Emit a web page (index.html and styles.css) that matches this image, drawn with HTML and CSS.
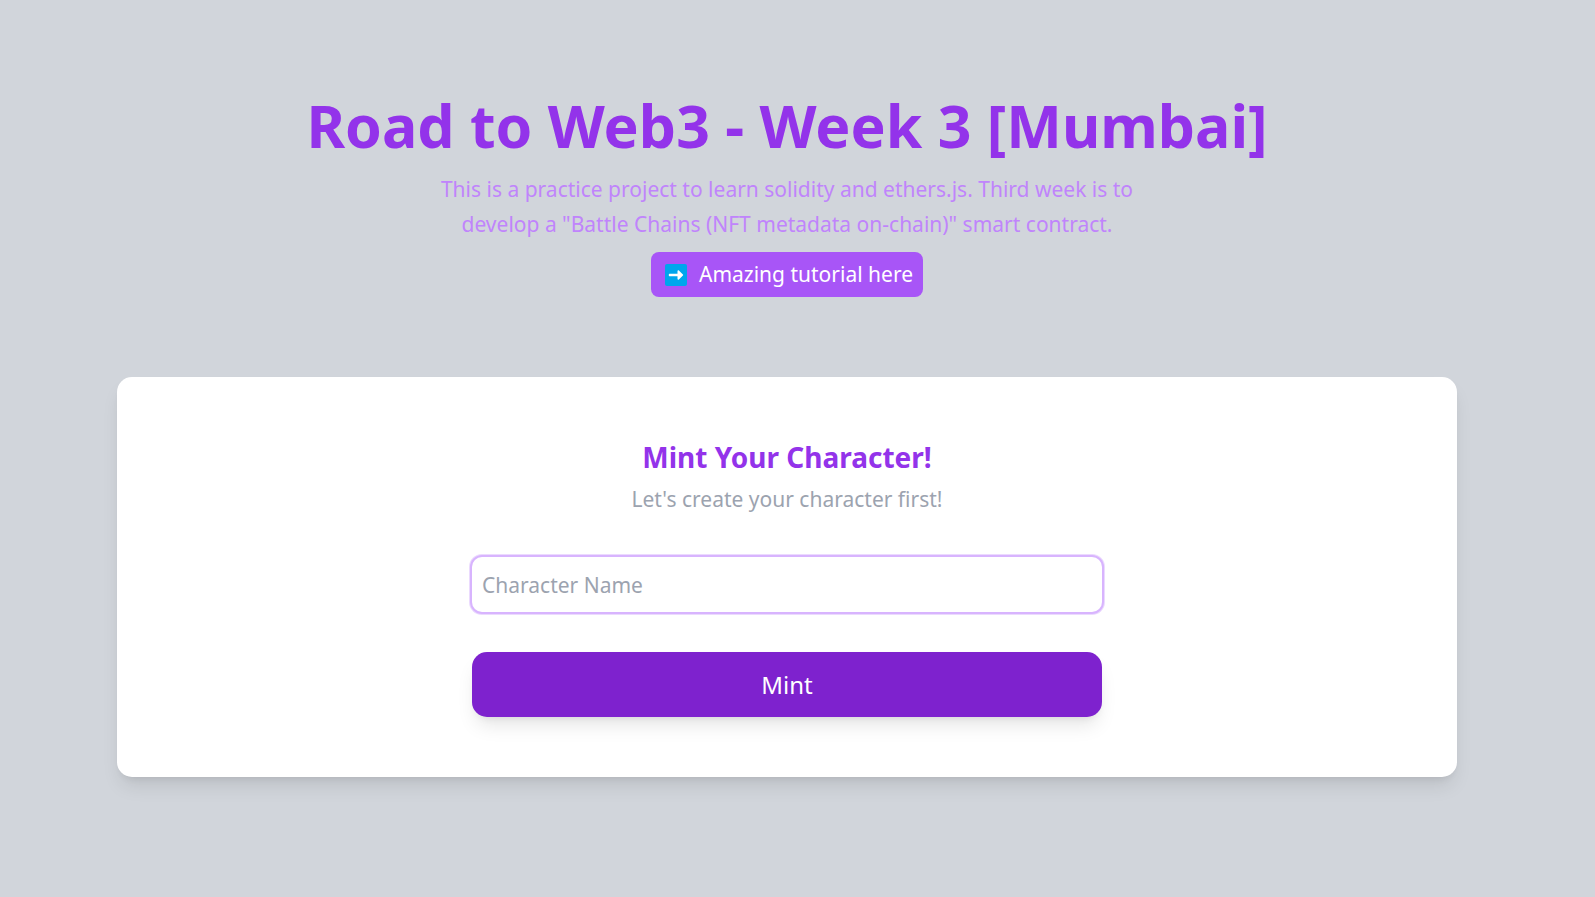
FILE: index.html
```
<!DOCTYPE html>
<html lang="en">
<head>
  <meta charset="utf-8">
  <meta name="viewport" content="width=device-width, initial-scale=1">
  <title>Road to Web3 - Week 3</title>
  <link rel="stylesheet" href="styles.css">
</head>
<body class="page">
  <header class="hero">
    <h1 class="hero-title">Road to Web3 - Week 3 [Mumbai]</h1>
    <p class="hero-text">This is a practice project to learn solidity and ethers.js. Third week is to<br>develop a "Battle Chains (NFT metadata on-chain)" smart contract.</p>
    <a class="tutorial-link" href="#">
      <svg class="tutorial-icon" viewBox="0 0 22 22" aria-hidden="true">
        <rect width="22" height="22" rx="2" fill="#00a6ed"/>
        <path d="M4.800 9.700h7.700V7.200c0-.8.8-1.200 1.400-.6l4 3.800c.4.4.4.8 0 1.200l-4 3.800c-.6.6-1.400.2-1.400-.6v-2.500H4.800c-.7 0-1-.4-1-1v-.6c0-.6.3-1 1-1z" fill="#fff"/>
      </svg>
      <span>Amazing tutorial here</span>
    </a>
  </header>
  <main class="card">
    <h2 class="card-title">Mint Your Character!</h2>
    <p class="card-text">Let's create your character first!</p>
    <form class="mint-form">
      <input class="name-input" type="text" placeholder="Character Name" aria-label="Character Name">
      <button class="mint-button" type="button">Mint</button>
    </form>
  </main>
</body>
</html>
```
FILE: styles.css
```
* {
  box-sizing: border-box;
}

.page {
  margin: 0;
  min-height: 100vh;
  padding: 90px 138px 120px 117px;
  background: #d1d5db;
  font-family: "Noto Sans", "Open Sans", sans-serif;
}

.hero {
  display: flex;
  flex-direction: column;
  align-items: center;
  text-align: center;
}

.hero-title {
  margin: 0;
  color: #9333ea;
  font-size: 59px;
  font-weight: 700;
  line-height: 70px;
}

.hero-text {
  margin: 12px 0 10px;
  color: #c084fc;
  font-size: 21px;
  line-height: 35px;
}

.tutorial-link {
  display: flex;
  align-items: center;
  gap: 12px;
  padding: 5px 10px 5px 14px;
  border-radius: 8px;
  background: #a855f7;
  color: #fff;
  font-size: 21px;
  line-height: 35px;
  text-decoration: none;
}

.tutorial-icon {
  width: 22px;
  height: 22px;
}

.card {
  display: flex;
  flex-direction: column;
  align-items: center;
  margin-top: 80px;
  padding: 60px;
  border-radius: 15px;
  background: #fff;
  box-shadow: 0 12px 19px -4px rgba(0, 0, 0, 0.1), 0 5px 8px -5px rgba(0, 0, 0, 0.1);
  text-align: center;
}

.card-title {
  margin: 0 0 4px;
  color: #9333ea;
  font-size: 28px;
  font-weight: 700;
  line-height: 41px;
}

.card-text {
  margin: 0;
  color: #9ca3af;
  font-size: 21px;
  line-height: 35px;
}

.mint-form {
  display: flex;
  flex-direction: column;
  gap: 40px;
  width: 100%;
  max-width: 630px;
  margin-top: 40px;
}

.name-input {
  width: 100%;
  height: 55px;
  padding: 0 10px;
  border: 0;
  border-radius: 10px;
  outline: 0;
  background: #fff;
  box-shadow: 0 0 0 2px #d8b4fe, 0 0 0 3px #ebdafe;
  color: #374151;
  font-family: inherit;
  font-size: 21px;
}

.name-input::placeholder {
  color: #9ca3af;
  opacity: 1;
}

.mint-button {
  height: 65px;
  border: 0;
  border-radius: 15px;
  background: #7e22ce;
  box-shadow: 0 12px 19px -4px rgba(0, 0, 0, 0.1), 0 5px 8px -5px rgba(0, 0, 0, 0.1);
  color: #fff;
  font-family: inherit;
  font-size: 24px;
}
```
